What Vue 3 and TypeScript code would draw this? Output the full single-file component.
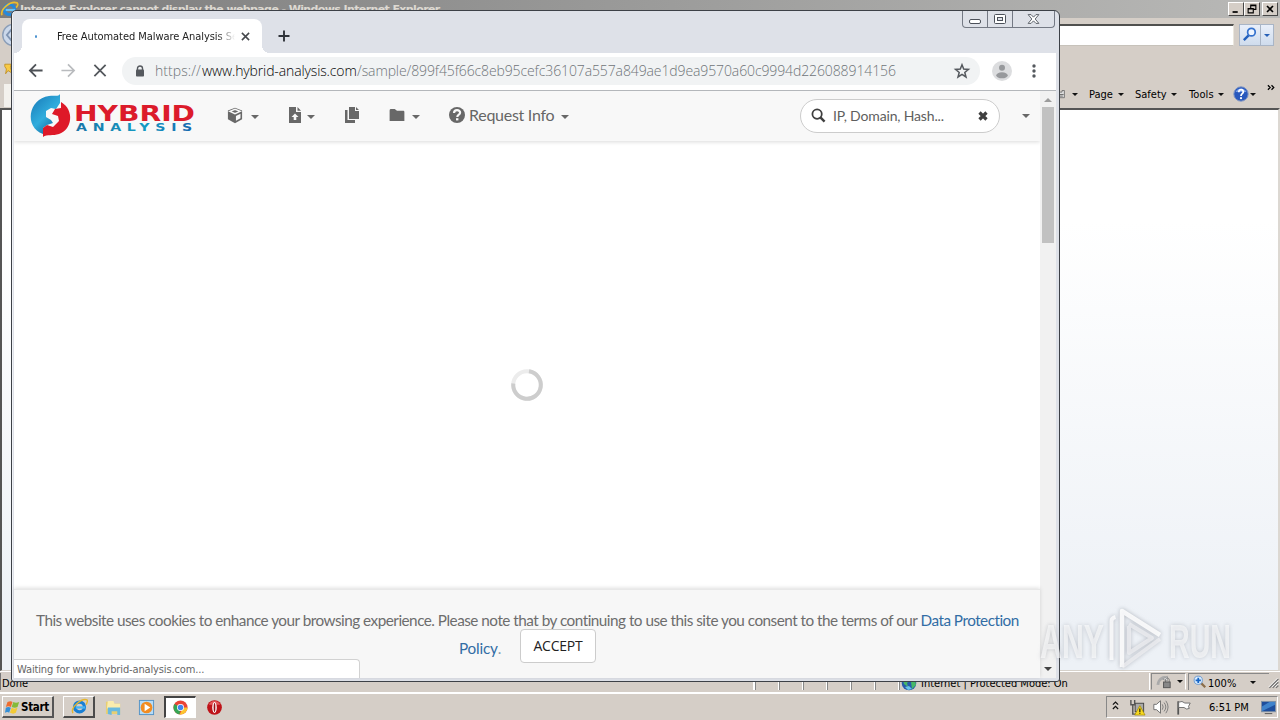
<script setup lang="ts">
interface MenuEntry { label: string; kind: string }

const ieMenu: MenuEntry[] = [
  { label: 'Page', kind: 'menu-page' },
  { label: 'Safety', kind: 'menu-safety' },
  { label: 'Tools', kind: 'menu-tools' },
]
const statusCells: number[] = [1, 2, 3, 4, 5, 6]
</script>

<template>
  <div class="desktop">
    <section class="ie">
      <header class="ie-title">
        <svg class="ie-logo" viewBox="0 0 18 18"><circle cx="9" cy="9" r="5.3" fill="none" stroke="#238ade" stroke-width="3.4" /><path d="M5 9.5h10" stroke="#6cc4f4" stroke-width="2.3" /><path d="M1 15C-1 9 10-1 17 2c2 2-1 5-1 5" fill="none" stroke="#edbd2c" stroke-width="1.8" /></svg>
        <span class="ie-caption">Internet Explorer cannot display the webpage - Windows Internet Explorer</span>
        <div class="classic-controls">
          <span class="cbtn"><svg viewBox="0 0 16 14"><path d="M4 10.5h6" stroke="#000" stroke-width="2" /></svg></span>
          <span class="cbtn"><svg viewBox="0 0 16 14"><path d="M6.5 6V2.5h6v5h-3M6 3h7" fill="none" stroke="#000" stroke-width="1.3" /><path d="M3.5 6.5h6v5h-6zM3 7h7" fill="none" stroke="#000" stroke-width="1.3" /></svg></span>
          <span class="cbtn last"><svg viewBox="0 0 16 14"><path d="M4.5 3.5l7 7m0-7l-7 7" stroke="#000" stroke-width="1.9" /></svg></span>
        </div>
      </header>
      <div class="ie-tools">
        <div class="ie-address">
          <span class="address-box"></span>
          <span class="search-btn"><svg viewBox="0 0 20 20"><circle cx="11.5" cy="7.5" r="4" fill="#eef5ff" stroke="#3572ce" stroke-width="1.8" /><path d="M8.5 11l-5 5" stroke="#2360bd" stroke-width="2.5" /></svg></span>
          <span class="search-more"><i class="caret blue"></i></span>
        </div>
        <div class="ie-menu">
          <svg class="printer" viewBox="0 0 10 12"><path d="M0 3h5V1h3v9H0" fill="#ddd" stroke="#666" /><path d="M1 6h6M2 8h4" stroke="#555" /></svg>
          <i class="caret black first"></i>
          <span v-for="m in ieMenu" :key="m.label" class="menu-item" :class="m.kind"><span>{{ m.label }}</span><i class="caret black"></i></span>
          <svg class="help" viewBox="0 0 16 16"><circle cx="8" cy="8" r="7.2" fill="#2858bd" stroke="#8297c4" /><path d="M2.5 6a6 6 0 0 1 11 0" fill="#789fe8" /><path d="M5.8 6.2c0-3.7 5-3.2 4.5-.1C10 7.8 8 7.7 8 10" fill="none" stroke="#fff" stroke-width="1.8" /><circle cx="8" cy="12.2" r="1.1" fill="#fff" /></svg>
          <i class="caret black help-caret"></i>
          <svg class="more" viewBox="0 0 10 8"><path d="M1 1l2.5 2.5L1 6M5 1l2.5 2.5L5 6" fill="none" stroke="#000" stroke-width="1.4" /></svg>
        </div>
        <svg class="nav-orb" viewBox="0 0 12 28"><circle cx="14" cy="14" r="11.5" fill="#cbd8ea" stroke="#8b9eb8" stroke-width="1.5" /><path d="M12 8l-5 6 5 6" fill="none" stroke="#8095b3" stroke-width="2" /></svg>
        <svg class="fav-star" viewBox="0 0 10 14"><path d="M1 1h8l-1 4 2 7-5-3-3 4 1-6-2-3z" fill="#f8ca45" stroke="#bd8a1c" /></svg>
        <span class="tab-fragment"></span>
      </div>
      <div class="ie-content"></div>
      <footer class="ie-status">
        <span class="done">Done</span>
        <span v-for="cell in statusCells" :key="cell" class="cell"></span>
        <span class="zone">
          <svg viewBox="0 0 16 16"><circle cx="8" cy="8" r="7.3" fill="#285cab" /><path d="M2 5l5-3 2 3-3 3 1 4-4-3zM10 7l4-2 1 5-4 4z" fill="#48b867" /><path d="M4 12l4-1 3 3-4 1z" fill="#69c4e6" /></svg>
          <span>Internet | Protected Mode: On</span>
        </span>
        <span class="privacy"><svg viewBox="0 0 18 16"><path d="M2 11c1-7 6-9 10-7" fill="none" stroke="#aaa" stroke-width="3" /><path d="M7 5l5-3v5z" fill="#eee" stroke="#999" /><path d="M10 8V6c0-3 4-3 4 0v2" fill="none" stroke="#777" /><rect x="8" y="8" width="7" height="6" fill="#888" stroke="#555" /></svg><i class="caret black"></i></span>
        <span class="magnify"><svg viewBox="0 0 16 16"><path d="M9 9l5 5" stroke="#8b6d4a" stroke-width="2.5" /><circle cx="6" cy="6" r="4.7" fill="#d9edff" stroke="#6393ce" /><path d="M3 6h6M6 3v6" stroke="#1765c6" stroke-width="2" /></svg><span>100%</span><i class="caret black"></i></span>
        <svg class="grip" viewBox="0 0 16 16"><path d="M3 14L14 3M7 14l7-7M11 14l3-3" stroke="#777" stroke-width="1.7" /><path d="M2 13L13 2M6 13l8-8M10 13l4-4" stroke="#fff" /></svg>
      </footer>
    </section>

    <section class="chrome">
      <div class="window-controls">
        <span><svg viewBox="0 0 24 16"><rect x="6.5" y="8.5" width="11" height="4" rx="1.5" fill="#fff" stroke="#4c515a" /></svg></span>
        <span><svg viewBox="0 0 24 16"><rect x="6.5" y="3.5" width="11" height="9" rx="1" fill="#fff" stroke="#4c515a" /><rect x="9.5" y="6.5" width="5" height="3" fill="#dee1e8" stroke="#4c515a" /></svg></span>
        <span class="wide"><svg viewBox="0 0 42 16"><path d="M15.5 3.5h3l2.5 2.6 2.5-2.6h3L22.7 8l3.8 4.5h-3L21 9.900l-2.5 2.600h-3L19.300 8z" fill="#fff" stroke="#4c515a" stroke-width=".9" /></svg></span>
      </div>
      <div class="tabs">
        <div class="tab">
          <i class="load-dot"></i>
          <span class="tab-label">Free Automated Malware Analysis Se</span>
          <svg class="tab-x" viewBox="0 0 10 10"><path d="M1 1l8 8m0-8L1 9" stroke="#45484c" stroke-width="1.7" /></svg>
        </div>
        <svg class="new-tab" viewBox="0 0 12 12"><path d="M6 .5v11M.5 6h11" stroke="#30343a" stroke-width="1.9" /></svg>
      </div>
      <div class="toolbar">
        <svg class="nav back" viewBox="0 0 16 16"><path d="M15 8H2M8 1.5L1.5 8 8 14.5" fill="none" stroke="#4e5257" stroke-width="1.9" /></svg>
        <svg class="nav forward" viewBox="0 0 16 16"><path d="M1 8h13M8 1.5L14.5 8 8 14.5" fill="none" stroke="#b9bbbe" stroke-width="1.8" /></svg>
        <svg class="nav stop" viewBox="0 0 16 16"><path d="M2 2l12 12m0-12L2 14" stroke="#55595e" stroke-width="1.9" /></svg>
        <div class="omnibox">
          <svg class="lock" viewBox="0 0 10 12"><path d="M2.5 5V3.300c0-3 5-3 5 0V5" fill="none" stroke="#55595e" stroke-width="1.4" /><rect x="1" y="4.500" width="8" height="7" rx=".8" fill="#55595e" /></svg>
          <span class="url"><span class="scheme">https://</span><span class="host">www.hybrid-analysis.com</span><span class="path">/sample/899f45f66c8eb95cefc36107a557a849ae1d9ea9570a60c9994d226088914156</span></span>
          <svg class="star" viewBox="0 0 16 16"><path d="M8 1.800l1.700 4.300 4.700.3-3.600 3 1.200 4.600-4-2.600L4 14l1.200-4.600-3.600-3 4.700-.3z" fill="none" stroke="#55595e" stroke-width="1.5" /></svg>
        </div>
        <svg class="avatar" viewBox="0 0 20 20"><circle cx="10" cy="10" r="10" fill="#dcdddf" /><circle cx="10" cy="6.700" r="3" fill="#97999c" /><ellipse cx="10" cy="14.300" rx="5.700" ry="3" fill="#97999c" /></svg>
        <svg class="kebab" viewBox="0 0 4 14"><circle cx="2" cy="2" r="1.700" fill="#55595e" /><circle cx="2" cy="7" r="1.700" fill="#55595e" /><circle cx="2" cy="12" r="1.700" fill="#55595e" /></svg>
      </div>

      <div class="viewport">
        <main class="page">
          <nav class="site-nav">
            <svg class="brand" viewBox="0 0 164 44">
              <defs>
                <linearGradient id="brandBlue" x1="0" x2=".7" y2="1"><stop stop-color="#1676b5" /><stop offset=".6" stop-color="#31addd" /><stop offset="1" stop-color="#16699e" /></linearGradient>
                <linearGradient id="brandText" x2="1"><stop stop-color="#1975a8" /><stop offset=".55" stop-color="#149bc3" /><stop offset="1" stop-color="#1762ad" /></linearGradient>
              </defs>
              <path d="M29 0V9L25 15 20 14 15 17 15 23 20 26 22 29 16 31 12 34 12 40C-7 33-3 5 18 2c6-1 9 1 11-2z" fill="url(#brandBlue)" />
              <path d="M30 8C44 16 41 36 28 40 22 42 16 40 12 43L12 34 16 31 22 33 28 27 27 22 21 20 24 15 30 14z" fill="#de1928" />
              <text x="43" y="26.5" class="brand-main" textLength="121" lengthAdjust="spacingAndGlyphs">HYBRID</text>
              <text x="45" y="37" class="brand-sub" textLength="122" lengthAdjust="spacingAndGlyphs">ANALYSIS</text>
            </svg>
            <span class="site-item cube"><svg viewBox="0 0 18 18"><path d="M9 .7l7.500 3v9.400L9 17.300l-7.500-4.200V3.700z" fill="#686868" /><path d="M3.600 4.600L9 2.500l5.400 2.100L9 7z" fill="none" stroke="#f8f8f8" stroke-width="1.5" /><path d="M10 9.500l4.800-2.400v4.700L10 14.500z" fill="#f8f8f8" /></svg><i class="caret"></i></span>
            <span class="site-item upload"><svg viewBox="0 0 14 16"><path d="M1 0h7v5h5v11H1zM9.500 0L13 3.700H9.500z" fill="#686868" /><path d="M7 6.500L3.500 10h2.200v3h2.600v-3h2.200z" fill="#f8f8f8" /></svg><i class="caret"></i></span>
            <span class="site-item copies"><svg viewBox="0 0 14 16"><path d="M0 3h2.500v10H10v3H0zM4 0h6v4h4v8H4zM11 0l3 3h-3z" fill="#686868" /></svg></span>
            <span class="site-item folder"><svg viewBox="0 0 16 13"><path d="M0 1.500Q0 0 1.500 0h4L8 2h7q1 0 1 1.500V13H0z" fill="#686868" /></svg><i class="caret"></i></span>
            <span class="site-item request"><svg viewBox="0 0 16 16"><circle cx="8" cy="8" r="8" fill="#686868" /><path d="M5 6c.2-4.200 6.300-3.500 6.100-.2C11 7.800 8.300 7.400 8.300 10" fill="none" stroke="#f8f8f8" stroke-width="2.2" /><rect x="7" y="11.200" width="2.400" height="2.200" fill="#f8f8f8" /></svg><span class="request-label">Request Info</span><i class="caret"></i></span>
            <div class="site-search">
              <svg class="search-icon" viewBox="0 0 16 16"><circle cx="6.500" cy="6.500" r="5" fill="none" stroke="#3f3f3f" stroke-width="1.900" /><path d="M10 10l4.500 4.500" stroke="#3f3f3f" stroke-width="2.600" /></svg>
              <span class="hint">IP, Domain, Hash...</span>
              <svg class="clear" viewBox="0 0 10 10"><path d="M1.500 1.500l7 7m0-7l-7 7" stroke="#3f3f3f" stroke-width="3.200" /></svg>
            </div>
            <i class="caret account"></i>
          </nav>
          <div class="loading">
            <svg viewBox="0 0 34 34"><circle cx="17" cy="17" r="13.800" fill="none" stroke="#ececec" stroke-width="4" /><path d="M19 3.300A13.800 13.800 0 1 1 3.300 15.500" fill="none" stroke="#cdcdcd" stroke-width="4" /></svg>
          </div>
          <aside class="cookie">
            <p class="line one">This website uses cookies to enhance your browsing experience. Please note that by continuing to use this site you consent to the terms of our <a>Data Protection</a></p>
            <div class="line two"><a>Policy</a><span class="dot">.</span><button>ACCEPT</button></div>
          </aside>
          <div class="load-status">Waiting for www.hybrid-analysis.com...</div>
        </main>
        <div class="scrollbar"><i class="up"></i><i class="thumb"></i><i class="down"></i></div>
      </div>
    </section>

    <svg class="watermark" viewBox="0 0 200 68">
      <g class="mark-shadow">
        <text x="2" y="52" class="mark-text" textLength="64" lengthAdjust="spacingAndGlyphs">ANY</text>
        <text x="131" y="52" class="mark-text" textLength="62" lengthAdjust="spacingAndGlyphs">RUN</text>
        <path d="M73.500 54V15q0-3 4-4" fill="none" stroke="#fff" stroke-opacity=".8" stroke-width="4" />
        <path d="M84 61V5L122 29" fill="none" stroke="#fff" stroke-opacity=".85" stroke-width="4.500" stroke-linejoin="round" />
        <path d="M122 33L84 61M91 20V47L114 32 91 18" fill="none" stroke="#f1f1f3" stroke-opacity=".7" stroke-width="4" stroke-linejoin="round" />
      </g>
    </svg>

    <footer class="taskbar">
      <button class="start"><svg viewBox="0 0 18 18"><path d="M3 3q4-2 6 0L7 9Q4 7 1 9z" fill="#ee6c2e" /><path d="M10 3q3 2 7 0l-2 6q-3 2-7 0z" fill="#85ba38" /><path d="M1 10q3-2 6 0l-2 6q-2-2-5 0z" fill="#348fd7" /><path d="M8 10q3 2 7 0l-2 6q-3 2-7 0z" fill="#f3ca36" /></svg><b>Start</b></button>
      <span class="task raised"><svg viewBox="0 0 18 18"><circle cx="9" cy="9.500" r="5.200" fill="none" stroke="#187fd4" stroke-width="3.500" /><path d="M5 10h10" stroke="#46b3f3" stroke-width="2.400" /><path d="M2 16C-1 10 11 0 17 2c1 1 0 3-1 5" fill="none" stroke="#e5b52b" stroke-width="1.500" /></svg></span>
      <span class="task explorer"><svg viewBox="0 0 18 18"><path d="M1 3h6l1 2h8v11H1z" fill="#e8cf72" /><path d="M3 2h6l1 3h6v5H2z" fill="#faecad" /><path d="M3 16V9h13v8h-3v-4H7v4z" fill="#68b9df" /></svg></span>
      <span class="task media"><svg viewBox="0 0 18 18"><rect x="1.500" y="1.500" width="15" height="15" fill="#b6dcf7" stroke="#5292c6" /><circle cx="9" cy="9" r="6.200" fill="#f28c21" /><path d="M7 5l6 4-6 4z" fill="#fff" /></svg></span>
      <span class="task sunken"><svg viewBox="0 0 18 18"><circle cx="9" cy="9" r="7.500" fill="#ea4435" /><path d="M9 9L2.600 5.200A7.500 7.500 0 0 0 8 16.400z" fill="#35a655" /><path d="M9 9h7.500A7.500 7.500 0 0 1 8 16.400L12 9z" fill="#fbc52f" /><circle cx="9" cy="9" r="3.700" fill="#fff" /><circle cx="9" cy="9" r="2.900" fill="#4285ed" /></svg></span>
      <span class="task opera"><svg viewBox="0 0 18 18"><circle cx="9" cy="9" r="7.800" fill="#bf1319" /><path d="M3 6a6.500 6.500 0 0 1 12 0" fill="#e45759" /><ellipse cx="9" cy="9" rx="2.400" ry="5.700" fill="#fff" /><ellipse cx="9" cy="9" rx=".9" ry="4.700" fill="#991016" /></svg></span>
      <div class="tray">
        <svg class="chevrons" viewBox="0 0 8 12"><path d="M1 5l3-3 3 3M1 10l3-3 3 3" fill="none" stroke="#111" stroke-width="1.400" /></svg>
        <svg class="network" viewBox="0 0 18 18"><rect x="6.500" y="4.500" width="9" height="9" fill="#aaa" stroke="#444" /><path d="M2 1v5h4V1M4 6v10h7" fill="none" stroke="#555" stroke-width="1.500" /><path d="M11.500 7l5.500 10H6z" fill="#f7d81e" stroke="#9c8400" stroke-width=".7" /><path d="M11.500 10v4m0 1v1" stroke="#111" stroke-width="1.200" /></svg>
        <svg class="volume" viewBox="0 0 18 18"><path d="M1.500 6h3L9 2v14l-4.500-4h-3z" fill="#fff" stroke="#666" /><path d="M11 6q2 3 0 6M13 4q4 5 0 10M15 2q5 7 0 14" fill="none" stroke="#777" /></svg>
        <svg class="flag" viewBox="0 0 18 18"><path d="M2.500 17V2" stroke="#555" stroke-width="2" /><path d="M3 3q4-2 7 1h6l-2 4 1 2q-3 2-6-1H3z" fill="#fff" stroke="#666" /></svg>
        <span class="clock">6:51 PM</span>
        <svg class="show-desktop" viewBox="0 0 18 16"><rect x="1.500" y="1.500" width="15" height="11" fill="#1e4e9c" stroke="#8192a5" /><path d="M2 7l8-5h6v3L2 12z" fill="#3f83cb" /><path d="M5 14.500h8" stroke="#555" /></svg>
      </div>
    </footer>
  </div>
</template>

<style>
body { overflow: hidden; }
</style>

<style scoped>
* { box-sizing: border-box; }
svg { display: block; flex: none; overflow: visible; }
span, p, a { white-space: pre; }
.desktop { position: relative; width: 1280px; height: 720px; overflow: hidden; background: #d5cec7; font-family: "DejaVu Sans Condensed", "DejaVu Sans", sans-serif; font-stretch: condensed; }
.ie { position: absolute; inset: 0 0 27px; display: flex; flex-direction: column; }
.ie-title { height: 18px; display: flex; align-items: center; background: linear-gradient(90deg, #7c7c7c, #b9b9b7); }
.ie-logo { width: 17px; height: 17px; margin-left: 1px; }
.ie-caption { margin-left: 2px; padding-top: 1px; color: #ddd9d2; font: 700 11px "DejaVu Sans", sans-serif; letter-spacing: -.61px; }
.classic-controls { margin-left: auto; display: flex; padding-right: 2px; }
.cbtn { width: 16px; height: 14px; background: #d5cec7; border: 1px solid; border-color: #fff #474747 #474747 #fff; }
.cbtn.last { margin-left: 2px; }
.cbtn svg { width: 14px; height: 12px; }
.ie-tools { position: relative; height: 91px; flex: none; background: #d5cec7; }
.ie-address { display: flex; height: 33px; padding: 6px 6px 0 0; justify-content: flex-end; }
.address-box { width: 1150px; height: 22px; margin-right: 5px; background: #fff; border: solid; border-width: 2px 1px 1px; border-color: #50504e #eae6dd #c7c2ba #666; }
.search-btn, .search-more { height: 22px; border: 1px solid #a9b5c6; background: linear-gradient(#e9effa, #cfdced); }
.search-btn { width: 22px; }
.search-btn svg { width: 20px; height: 19px; }
.search-more { width: 13px; display: flex; justify-content: center; align-items: center; border-left: 0; }
.ie-menu { position: relative; height: 58px; margin-left: 1058px; display: flex; align-items: center; font-size: 11px; color: #000; padding-top: 29px; padding-bottom: 1px; }
.printer { width: 8px; height: 11px; }
.menu-item { display: flex; align-items: center; justify-content: space-between; }
.menu-item.menu-page { width: 35px; margin-left: 11px; letter-spacing: 0; }
.menu-item.menu-safety { width: 42px; margin-left: 11px; letter-spacing: 0; }
.menu-item.menu-tools { width: 35px; margin-left: 12px; letter-spacing: .1px; }
.help { width: 16px; height: 16px; margin-left: 9px; }
.help-caret { margin-left: 1px; }
.more { position: absolute; right: 4px; top: 33px; width: 9px; height: 8px; }
.caret { display: block; flex: none; width: 0; height: 0; border-style: solid; border-width: 4px 4px 0; border-color: #686868 transparent transparent; }
.caret.black { border-width: 3px 3px 0; border-top-color: #111; }
.caret.blue { border-width: 3px 3px 0; border-top-color: #2760b7; }
.caret.first { margin-left: 6px; }
.nav-orb { position: absolute; left: 0; top: 4px; width: 12px; height: 26px; }
.fav-star { position: absolute; left: 4px; top: 44px; width: 8px; height: 14px; }
.tab-fragment { position: absolute; left: 4px; top: 66px; width: 7px; height: 23px; background: #f3f1ed; }
.ie-content { height: 563px; flex: none; margin-top: -1px; position: relative; border: 1px solid #505050; border-width: 2px 2px 1px; border-color: #555 #dcd8d2 #d6d1ca #555; background: linear-gradient(#fff 0 20%, #edf1f6 92%); }
.ie-status { height: 22px; flex: none; padding: 1px 0 2px; display: flex; align-items: stretch; font-size: 11px; letter-spacing: 0; color: #000; border-top: 1px solid #fff; border-bottom: 1px solid #fff; }
.done { width: 755px; padding-left: 1px; line-height: 21px; border-left: 1px solid #777; border-right: 2px solid #fff; }
.cell { width: 24px; border-left: 1px solid #888; border-right: 1px solid #fff; }
.zone { display: flex; width: 251px; padding-left: 1px; gap: 4px; line-height: 21px; border-left: 1px solid #888; border-right: 1px solid #fff; letter-spacing: 0; }
.zone svg { width: 16px; height: 16px; margin-top: 2px; }
.privacy { margin-left: 1px; width: 35px; display: flex; align-items: center; border: 1px solid; border-color: #888 #fff transparent #888; padding-left: 4px; gap: 4px; }
.privacy svg { width: 17px; height: 16px; }
.magnify { margin-left: 2px; width: 81px; display: flex; align-items: center; border-left: 1px solid #888; border-top: 1px solid #888; padding-left: 4px; }
.magnify span { padding-top: 2px; }
.magnify svg { width: 14px; height: 14px; margin-right: 1px; }
.magnify .caret { margin-left: 14px; }
.grip { width: 13px; height: 14px; margin: 3px 0 0 -2px; }

.chrome { position: absolute; left: 11px; top: 10px; width: 1049px; height: 672px; padding: 0 3px 3px 2px; display: flex; flex-direction: column; border: 1px solid #3d4147; border-radius: 5px 6px 3px 3px; background: #dee1e8; box-shadow: inset 1px 0 #f1f3f7; }
.window-controls { position: absolute; right: 4px; top: 0; display: flex; height: 17px; border: 1px solid #747984; border-top: 0; border-radius: 0 0 4px 4px; }
.window-controls span { width: 25px; }
.window-controls span:first-child { width: 24px; }
.window-controls span + span { border-left: 1px solid #747984; }
.window-controls .wide { width: 42px; }
.window-controls svg { width: 24px; height: 16px; }
.window-controls .wide svg { width: 41px; }
.tabs { height: 42px; flex: none; padding: 8px 0 0 8px; display: flex; }
.tab { position: relative; width: 240px; height: 34px; padding-left: 13px; display: flex; align-items: center; background: #fff; border-radius: 8px 8px 0 0; }
.tab::before, .tab::after { content: ""; position: absolute; bottom: 0; width: 8px; height: 8px; }
.tab::before { left: -8px; background: radial-gradient(circle at 0 0, transparent 8px, #fff 8px); }
.tab::after { right: -8px; background: radial-gradient(circle at 100% 0, transparent 8px, #fff 8px); }
.load-dot { width: 2px; height: 3px; background: #438ece; border-radius: 50%; }
.tab-label { width: 178px; margin-left: 20px; color: #222; font-size: 11px; letter-spacing: -.06px; -webkit-mask-image: linear-gradient(90deg, #000 160px, transparent 178px); mask-image: linear-gradient(90deg, #000 160px, transparent 178px); }
.tab-x { width: 9px; height: 9px; margin-left: 6px; }
.new-tab { width: 12px; height: 12px; margin: 11px 0 0 16px; }
.toolbar { height: 38px; flex: none; padding: 0 18px 2px 14px; display: flex; align-items: center; border-bottom: 1px solid #b4b7bb; background: #fff; }
.nav { width: 16px; height: 15px; }
.forward { margin-left: 16px; }
.stop { margin-left: 16px; }
.omnibox { width: 858px; height: 28px; margin-left: 14px; padding: 0 10px 0 13px; display: flex; align-items: center; border-radius: 14px; background: #f1f3f4; }
.lock { width: 10px; height: 12px; }
.url { margin-left: 10px; width: 790px; color: #6f7378; font: 300 14px "Open Sans", sans-serif; display: flex; }
.scheme { width: 47px; letter-spacing: .06px; }
.host { width: 155px; color: #050505; letter-spacing: -.13px; }
.path { letter-spacing: -.11px; }
.star { width: 16px; height: 16px; margin-left: auto; }
.avatar { width: 20px; height: 20px; margin-left: 12px; }
.kebab { width: 4px; height: 14px; margin-left: 20px; }
.viewport { flex: 1; min-height: 0; display: flex; background: #fff; }
.page { position: relative; flex: 1; min-width: 0; display: flex; flex-direction: column; font-family: Lato, sans-serif; background: #fff; }
.site-nav { height: 50px; flex: none; padding: 0 10px 1px 17px; display: flex; align-items: center; background: #f8f8f8; box-shadow: 0 1px 4px #00000026; clip-path: inset(0 0 -7px); }
.brand { width: 164px; height: 44px; margin-top: 1px; }
.brand-main { fill: #dc1b2b; font: 700 20.5px "DejaVu Sans", sans-serif; font-stretch: normal; }
.brand-sub { fill: url(#brandText); font: 700 10px "DejaVu Sans", sans-serif; font-stretch: normal; letter-spacing: 4px; }
.site-item { display: flex; align-items: center; gap: 7px; color: #666; }
.site-item svg { width: 18px; height: 17px; margin-top: -1px; }
.cube { margin-left: 31px; }
.upload { margin-left: 29px; }
.upload svg, .copies svg { width: 14px; height: 16px; }
.upload .caret { margin-left: -2px; }
.copies { margin-left: 30px; }
.folder { margin-left: 30px; }
.folder svg { width: 16px; height: 12px; }
.request { margin-left: 29px; }
.request svg { width: 16px; height: 16px; }
.request-label { margin: -2px 0 0 -3px; width: 85px; font-size: 16px; letter-spacing: -.28px; }
.site-item .caret { transform: translateY(1px); }
.site-search { width: 200px; height: 34px; margin-left: auto; padding: 0 11px 0 10px; display: flex; align-items: center; border: 1px solid #ccc; border-radius: 17px; background: #fff; }
.search-icon { width: 15px; height: 15px; }
.hint { color: #5e5e5e; font-size: 14px; margin: -1px 0 0 7px; letter-spacing: -.16px; }
.clear { width: 10px; height: 10px; margin-left: auto; }
.account { margin-left: 22px; }
.loading { flex: 1; display: grid; place-items: center; padding: 39px 0 0; }
.loading svg { width: 34px; height: 34px; }
.cookie { height: 89px; flex: none; padding-top: 16px; color: #6d6d6d; font-size: 15.3px; background: #f7f7f7; border-top: 1px solid #e8e8e8; box-shadow: 0 -1px 4px #0002; }
.cookie a { color: #326da5; }
.line { margin: 0; height: 28px; line-height: 28px; }
.one { padding-left: 22px; letter-spacing: -.51px; }
.two { display: flex; padding-left: 445px; }
.two a { letter-spacing: -.2px; }
.dot { color: #8b9fad; }
.two button { width: 76px; height: 34px; margin: -5px 444px 0 auto; border: 1px solid #ccc; border-radius: 4px; background: #fff; color: #222; font: 14px "Open Sans", sans-serif; padding: 0 0 2px; letter-spacing: -.2px; }
.load-status { position: absolute; left: 0; bottom: 0; width: 346px; height: 19px; padding-left: 3px; border: 1px solid #d2d2d2; border-left: 0; border-bottom: 0; border-radius: 0 4px 0 0; color: #666; background: #fff; font: 11px/19px "DejaVu Sans Condensed", "DejaVu Sans", sans-serif; font-stretch: condensed; letter-spacing: -.13px; }
.scrollbar { width: 16px; display: flex; flex-direction: column; align-items: center; background: #f1f1f1; }
.up { margin-top: 7px; border: solid transparent; border-width: 0 4px 4px; border-bottom-color: #9c9c9c; }
.thumb { width: 12px; height: 136px; margin-top: 5px; background: #c1c1c1; }
.down { margin: auto 0 7px; border: solid transparent; border-width: 4px 4px 0; border-top-color: #444; }
.watermark { position: absolute; left: 1038px; top: 606px; width: 200px; height: 68px; z-index: 3; }
.mark-shadow { filter: drop-shadow(0 0 2px #777b8799); }
.mark-text { font: 700 49px "Liberation Sans", Arial, sans-serif; fill: #fff; fill-opacity: .6; }
.taskbar { position: absolute; left: 0; bottom: 0; width: 1280px; height: 27px; padding: 2px; display: flex; align-items: center; border-top: 1px solid #fff; background: #d5cec7; }
.start { width: 52px; height: 22px; padding: 0 2px; display: flex; align-items: center; gap: 1px; border: 2px solid; border-width: 1px 2px 2px 1px; border-color: #fff #555 #555 #fff; background: #d5cec7; color: #000; font: 11.5px "DejaVu Sans Condensed", sans-serif; letter-spacing: -.3px; }
.start svg { width: 15px; height: 16px; }
.start b { padding-top: 1px; }
.task { width: 32px; height: 22px; display: flex; align-items: center; justify-content: center; }
.raised { margin-left: 9px; padding-left: 2px; border: 1px solid; border-color: #fff #4b4b4b #4b4b4b #fff; border-width: 1px 2px 2px 1px; }
.explorer { margin-left: 2px; }
.media { margin-left: 1px; }
.sunken { margin-left: 2px; background: #fff; border: 1px solid; border-color: #444 #fff #fff #444; border-width: 2px 1px 1px 2px; }
.opera { margin-left: 2px; }
.task svg { width: 17px; height: 17px; }
.tray { width: 172px; height: 22px; margin-left: auto; padding-left: 5px; display: flex; align-items: center; border: 1px solid; border-color: #888 #fff #fff #888; font-size: 11px; }
.chevrons { width: 7px; height: 11px; margin-top: -3px; }
.network { width: 17px; height: 17px; margin-left: 10px; }
.volume { width: 17px; height: 16px; margin-left: 6px; }
.flag { width: 16px; height: 17px; margin-left: 7px; }
.clock { margin-left: 17px; width: 42px; }
.show-desktop { width: 17px; height: 15px; margin-left: 10px; }
</style>
